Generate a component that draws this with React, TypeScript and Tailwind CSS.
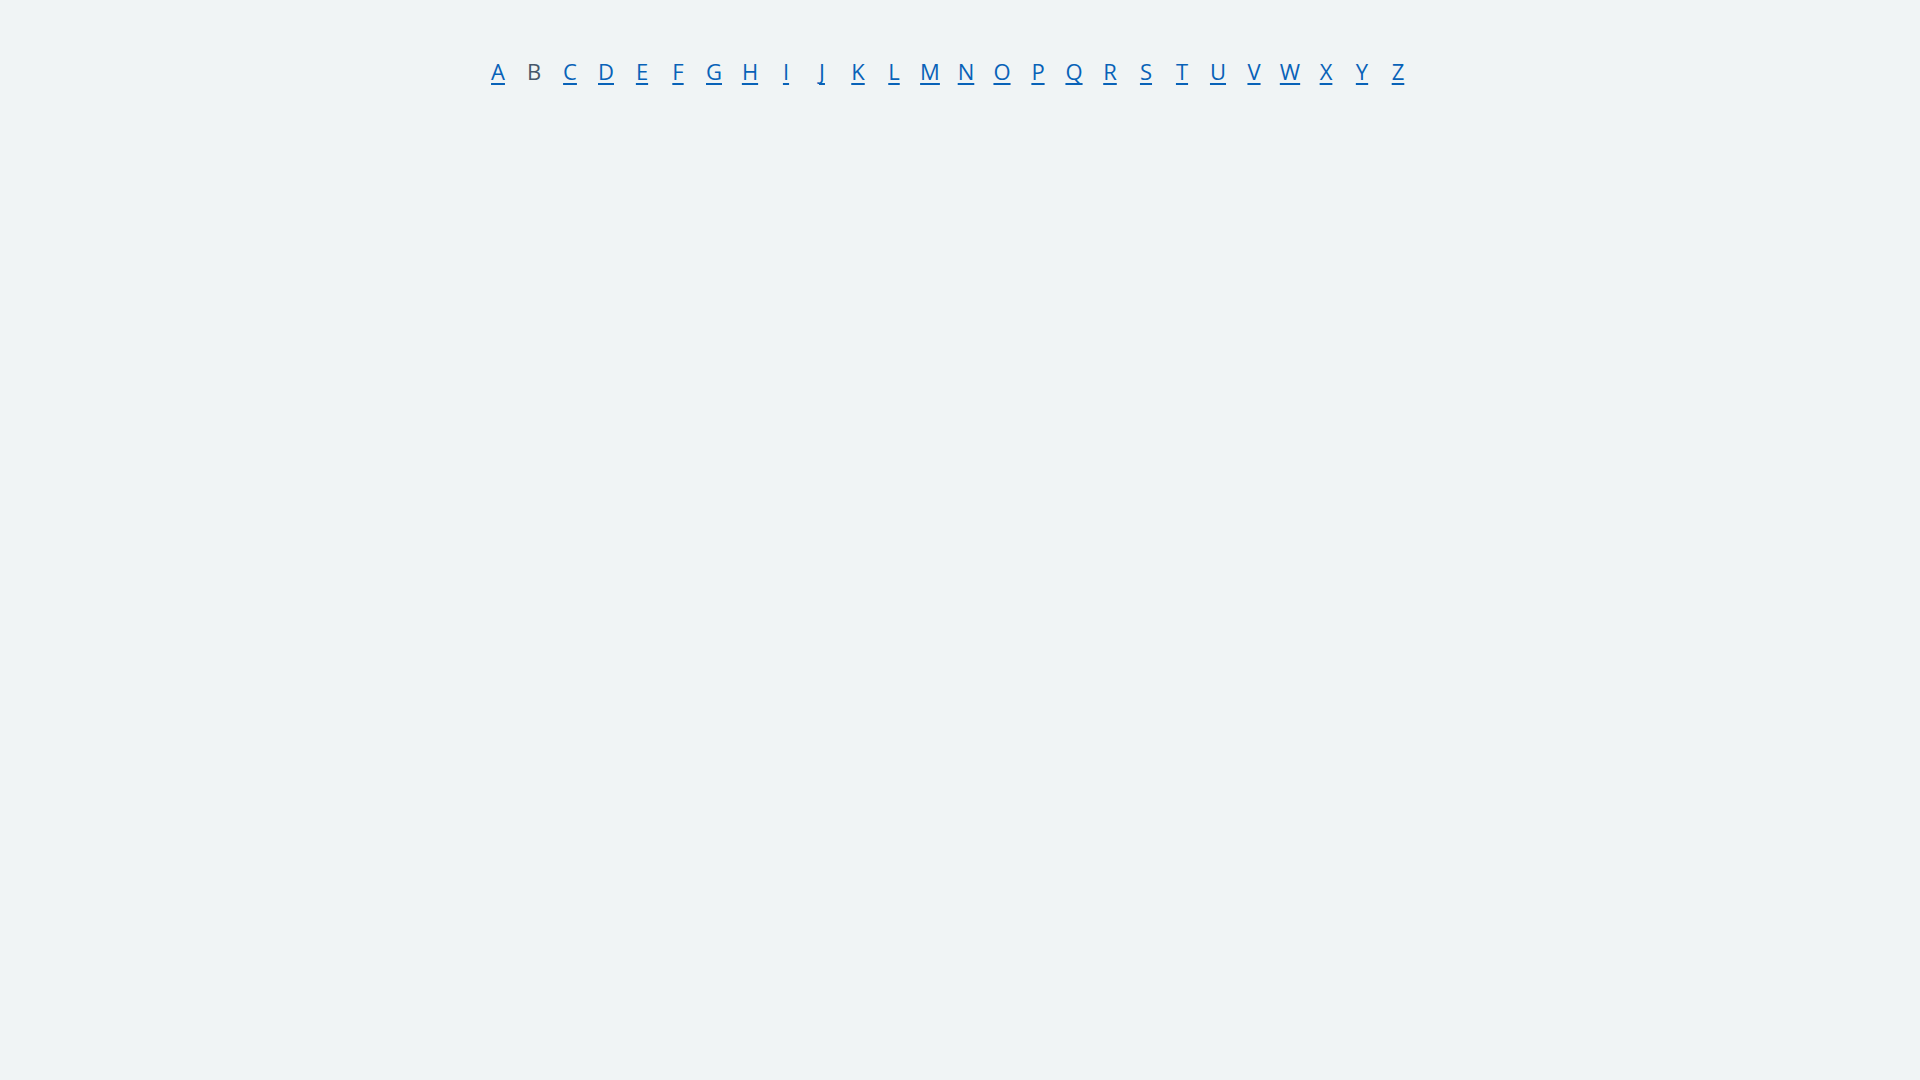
import React from "react";

const letters = "ABCDEFGHIJKLMNOPQRSTUVWXYZ".split("");

export default function App() {
  return (
    <div className="min-h-screen w-full bg-[#f0f4f5]" style={{ fontFamily: '"Open Sans", "Noto Sans", sans-serif' }}>
      <nav className="flex justify-center pr-[24px] pt-[55px]">
        {letters.map((l) => (
          <div key={l} className="w-[36px] flex justify-center text-[22px] leading-[32px]">
            {l === "B" ? (
              <span className="text-[#45576a]">{l}</span>
            ) : (
              <a
                href="#"
                className="text-[#0862b8] underline underline-offset-[3px] decoration-[2px] [text-decoration-skip-ink:none]"
              >
                {l}
              </a>
            )}
          </div>
        ))}
      </nav>
    </div>
  );
}
